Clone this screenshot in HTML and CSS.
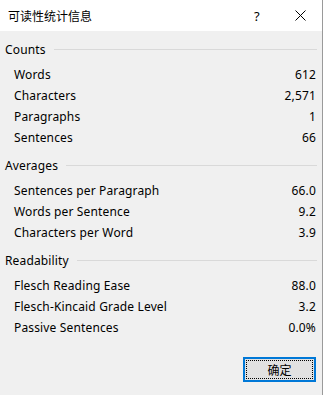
FILE: index.html
```html
<!DOCTYPE html>
<html lang="zh-CN">
<head>
    <meta charset="UTF-8">
    <title>可读性统计信息</title>
    <link rel="stylesheet" href="styles.css">
</head>
<body>
    <div class="dialog">
        <div class="titlebar">
            <span class="title">可读性统计信息</span>
            <span class="help">?</span>
            <span class="close">
                <svg width="11" height="11" viewBox="0 0 11 11"><path d="M0.5 0.5 L10.5 10.5 M10.5 0.5 L0.5 10.5" stroke="#000" stroke-width="1" fill="none"/></svg>
            </span>
        </div>
        <div class="content">
            <section class="group">
                <div class="group-head"><span>Counts</span></div>
                <div class="row"><span>Words</span><span>612</span></div>
                <div class="row"><span>Characters</span><span>2,571</span></div>
                <div class="row"><span>Paragraphs</span><span>1</span></div>
                <div class="row"><span>Sentences</span><span>66</span></div>
            </section>
            <section class="group">
                <div class="group-head"><span>Averages</span></div>
                <div class="row"><span>Sentences per Paragraph</span><span>66.0</span></div>
                <div class="row"><span>Words per Sentence</span><span>9.2</span></div>
                <div class="row"><span>Characters per Word</span><span>3.9</span></div>
            </section>
            <section class="group">
                <div class="group-head"><span>Readability</span></div>
                <div class="row"><span>Flesch Reading Ease</span><span>88.0</span></div>
                <div class="row"><span>Flesch-Kincaid Grade Level</span><span>3.2</span></div>
                <div class="row"><span>Passive Sentences</span><span>0.0%</span></div>
            </section>
            <div class="actions">
                <button class="ok"><span>确定</span></button>
            </div>
        </div>
    </div>
</body>
</html>
```

FILE: styles.css
```css
* {
    margin: 0;
    padding: 0;
    box-sizing: border-box;
}

body {
    width: 325px;
    height: 395px;
    overflow: hidden;
    background: #fff;
    font-family: "Noto Sans", "Noto Sans CJK SC", sans-serif;
    font-size: 12px;
    letter-spacing: 0.15px;
    color: #000;
    display: flex;
}

.dialog {
    width: 323px;
    height: 395px;
    background: #f0f0f0;
    border-right: 1px solid #9a9a9a;
    display: flex;
    flex-direction: column;
}

.titlebar {
    height: 31px;
    background: #fff;
    display: flex;
    align-items: center;
    padding-left: 8px;
    letter-spacing: 0;
}

.title {
    flex: 1;
    font-family: "Noto Sans CJK SC", sans-serif;
    font-size: 12px;
}

.help {
    width: 8px;
    margin-right: 33px;
    font-size: 13px;
}

.close {
    display: flex;
    margin-right: 16px;
}

.content {
    flex: 1;
    display: flex;
    flex-direction: column;
    padding: 7px 5px 0 5px;
}

.group + .group {
    margin-top: 6px;
}

.group-head {
    height: 22px;
    display: flex;
    align-items: center;
    gap: 8px;
    margin-bottom: 4px;
}

.group-head::after {
    content: "";
    flex: 1;
    height: 1px;
    background: #d9d9d9;
}

.row {
    height: 21px;
    display: flex;
    align-items: center;
    justify-content: space-between;
    padding-left: 9px;
    padding-right: 1px;
}

.actions {
    display: flex;
    justify-content: flex-end;
    margin-top: 19px;
    padding-right: 1px;
}

.ok {
    width: 73px;
    height: 25px;
    border: 2px solid #0078d7;
    background: #e1e1e1;
    padding: 1px;
    font-family: "Noto Sans CJK SC", sans-serif;
    font-size: 12px;
    letter-spacing: 0;
    color: #000;
    display: flex;
}

.ok span {
    flex: 1;
    display: flex;
    align-items: center;
    justify-content: center;
    border: 1px dotted #000;
}
```
